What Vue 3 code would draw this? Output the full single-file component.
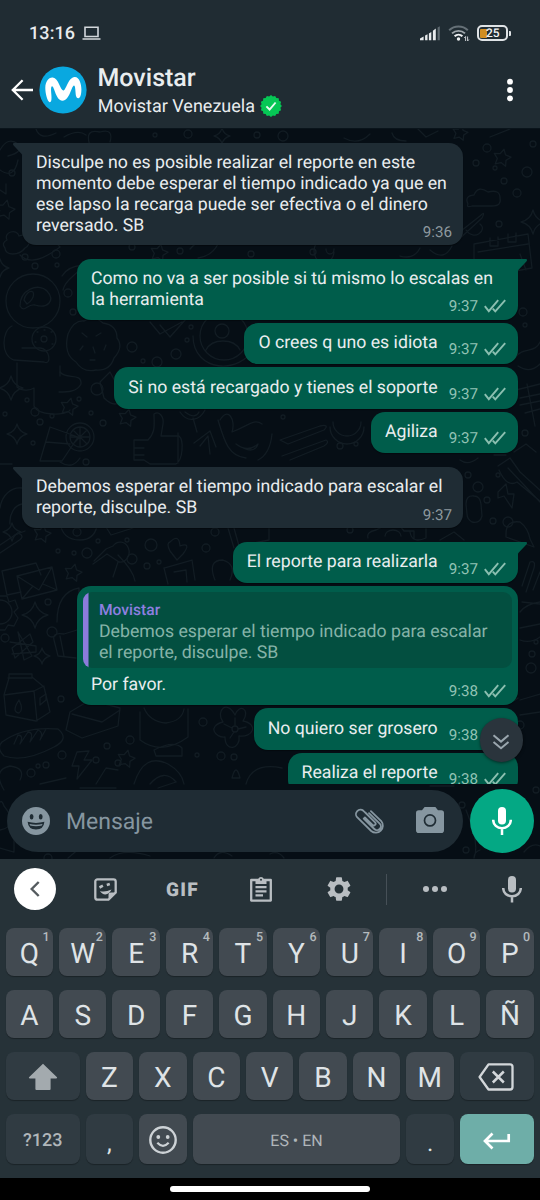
<script setup>
const messages = [
  { side: 'in', tail: true, lines: ['Disculpe no es posible realizar el reporte en este', 'momento debe esperar el tiempo indicado ya que en', 'ese lapso la recarga puede ser efectiva o el dinero', 'reversado. SB'], time: '9:36', wide: true },
  { side: 'out', tail: true, lines: ['Como no va a ser posible si tú mismo lo escalas en', 'la herramienta'], time: '9:37', wide: true },
  { side: 'out', lines: ['O crees q uno es idiota'], time: '9:37' },
  { side: 'out', lines: ['Si no está recargado y tienes el soporte'], time: '9:37' },
  { side: 'out', lines: ['Agiliza'], time: '9:37' },
  { side: 'in', tail: true, lines: ['Debemos esperar el tiempo indicado para escalar el', 'reporte, disculpe. SB'], time: '9:37', wide: true },
  { side: 'out', tail: true, lines: ['El reporte para realizarla'], time: '9:37' },
  { side: 'out', quote: { who: 'Movistar', lines: ['Debemos esperar el tiempo indicado para escalar', 'el reporte, disculpe. SB'] }, lines: ['Por favor.'], time: '9:38', wide: true },
  { side: 'out', lines: ['No quiero ser grosero'], time: '9:38' },
  { side: 'out', lines: ['Realiza el reporte'], time: '9:38' },
]

const row1 = 'QWERTYUIOP'.split('').map((k, i) => ({ k, n: (i + 1) % 10 }))
const row2 = 'ASDFGHJKLÑ'.split('')
const row3 = 'ZXCVBNM'.split('')

// Wallpaper doodles, in chat-area coordinates shifted by the header height.
const dots = [
  [25, 257, 3], [56, 254, 4], [35, 266, 3], [57, 265, 2], [68, 293, 4], [73, 312, 3], [132, 347, 5], [143, 361, 2],
  [191, 327, 2], [97, 389, 6], [5, 414, 2], [35, 412, 4], [52, 416, 2], [79, 399, 2], [91, 413, 2], [40, 422, 3], [103, 423, 3],
  [33, 443, 2], [27, 400, 2], [157, 362, 5], [176, 354, 5], [187, 340, 2], [487, 148, 4], [476, 163, 3], [495, 168, 2],
  [527, 172, 5], [504, 181, 3], [533, 144, 3], [517, 193, 4], [499, 224, 3], [523, 312, 4], [525, 325, 2], [12, 173, 3],
  [77, 532, 4], [98, 541, 2], [127, 540, 2], [151, 545, 6], [132, 559, 5], [87, 553, 5], [58, 551, 2], [74, 553, 2],
  [159, 562, 2], [206, 548, 4], [147, 566, 3], [215, 532, 4], [48, 602, 3], [52, 632, 5], [5, 638, 4], [61, 699, 3],
  [62, 755, 4], [46, 765, 3], [38, 766, 2], [31, 773, 4], [96, 760, 3], [107, 746, 3], [130, 740, 4], [118, 763, 3],
  [203, 722, 4], [221, 756, 4], [234, 757, 3], [197, 755, 2], [478, 487, 5], [468, 475, 3], [487, 500, 3], [498, 475, 2],
  [493, 521, 3], [508, 522, 5], [532, 654, 3], [531, 668, 5], [536, 642, 2], [188, 134, 4], [155, 135, 2], [257, 135, 3],
  [283, 136, 5], [180, 251, 3], [251, 254, 3], [132, 247, 3], [283, 417, 2], [340, 446, 3], [356, 444, 2], [313, 252, 3],
  [462, 805, 3], [466, 850, 3], [48, 858, 4], [525, 433, 3], [86, 462, 3], [350, 530, 3], [520, 725, 4], [536, 790, 3],
]
const stars = [[69, 407, 9], [127, 418, 9], [5, 210, 10], [502, 158, 9], [42, 534, 9], [73, 573, 9], [126, 759, 9], [460, 133, 8], [159, 253, 9]]
const sparks = [[11, 388, 12], [17, 434, 10], [533, 222, 12], [35, 615, 13], [42, 656, 8], [0, 268, 9], [222, 136, 8], [12, 532, 9]]
const shapes = [
  'M6 301a27 27 0 1 0 54 0a27 27 0 1 0-54 0M20 306c0-16 18-24 27-15c9 10 0 18-12 14c-8-2-10 9-15 1M24 300c1-6 6-10 9-8c2 4-2 10-6 12z',
  'M12 326c-10 4-12 30 2 34l30 2c8 4 6-14-4-14H22M17 363v24c6 5 14 3 17 1v18c4 10 32 10 36 4M60 372c6 8 22 0 21 12c-4 8-14 8-22 8',
  'M32 339a12 12 0 1 0 24 0a12 12 0 1 0-24 0M41 339a3 3 0 1 0 6 0a3 3 0 1 0-6 0M37 332h1M51 332h1M35 342h1M52 344h1M44 330h1',
  'M68 334q6-14 16-13q10-6 19 2q14 2 14 15q7 9-3 20q-4 13-18 12q-13 3-20-8q-13-8-8-28M82 333l5 4M96 336l5-3M80 350l3-4M93 347l2 6M106 345l-2 5M90 360h5',
  'M200 336a24 24 0 1 0 48 0a24 24 0 1 0-48 0M215 331a7 7 0 1 0 14 0a7 7 0 1 0-14 0M206 350c6-12 28-12 34 0M193 336c0 36 48 40 62 10',
  'M150 322l10 12l22-12M160 325l10 12l16-18M62 276c7-12 30-16 50-2M63 290c2-10 12-14 16-20',
  'M66 437a14 14 0 1 0 28 0a14 14 0 1 0-28 0M70 437a10 10 0 1 0 20 0a10 10 0 1 0-20 0M80 427v20M70 437h20M73 430l14 14M87 430l-14 14M50 427l28 10l-16 24H40zM46 442l24 2',
  'M134 440h14c8-8 6-16 6-26c6-4 10 4 9 10l-2 12h18c5 4 4 24-3 28h-26l-6-4h-10zM134 448h10M134 455h10M178 433v30',
  'M180 412c8 12 20 8 25-2M185 412c8 6 12 4 14 0M193 418l4 14M194 443l16-12l6 16M200 446l8-10l2 18M220 420c8-14 16 0 12 12c16-6 22-14 30-8M218 420c6 20 10 36 28 38M236 444q12 9 22 0q-4 12-22 0',
  'M7 240c-4-8 10-12 12-4c10-4 14 8 6 12c-6 8-20 8-20 0q-4-5 2-8M20 255c10 10 24 4 40-8l-12-14',
  'M468 204q-4-8 6-9q4-10 14-3q12-3 12 6q2 8-8 8h-20q-6 2-4-2M452 238l28-22q6-6 2 2l-26 24zM466 230c8 12 22 0 14-6',
  'M474 260v-16l54-10l4 34l-22 4M490 238v8h8v-9M508 234v8h8v-9M478 252l50-8M520 254l6 16M494 262l-14 10l30 4',
  'M330 427a17 17 0 1 0 34 0M333 422a14 14 0 0 0 28 0M280 440l40-14q10-2 4 4l-36 14zM282 456l44-16q4 2-2 6l-34 14M272 434q-2 20-14 26',
  'M515 358c8-12 20-4 25-16M518 366q12 8 22-2M516 390l24-6M520 398l20-4M520 405l20-4M525 413l15-4M527 384l8 42',
  'M2 571l34-8l5 12M2 571l5 24l14-3M17 576l35-9l5 23l-35 9zM17 576l22 14l13-23M22 599l11-13M57 590l-14-6',
  'M0 508a20 24 0 0 1 22-20M10 524a14 18 0 0 1 12-20M0 545l18-12q8 3 0 8l-18 12M60 522q2 18 20 18q14 0 17-14M106 527l5 8l22-7',
  'M170 542q9-9 10 4q12-4 3 8l-6 6l-7-9q-4-8 0-9M94 561l12-12l7-3a9 10 0 1 1 6 16l-12-8l-14 10M118 562l-5 15M118 555q15 15 17 26',
  'M228 528l6 20M234 528l5 18l30-6v-14M164 568l28-8l3 20M164 568l4 16M174 572l12-2l1 12M215 580q-8-20 8-20q14 4 7 20',
  'M-12 612a12 12 0 1 0 24 0a12 12 0 1 0-24 0M-1 596h8l2 6l6-2l3 8l-4 4l4 6l-4 8l-6-1l-3 5h-6M57 622q0-30 22-34v34',
  'M12 648l18-14l3 8l-18 16zM18 632l14 24l-8 4zM10 642l26 4v6l-24 2M54 640q-2-8 10-6l13-4M54 640l4 16l18 2M60 636l4 20',
  'M8 678h24v-4H9v4l-5 17l2 20l30 6l14-9l-6-25l-12-10M4 695l30-4l10-5M34 691l3 30M19 700q-8 12 0 13q5-3 0-13M40 698l6-4v6l-6 5z',
  'M2 742q22-16 56-13q12 10-4 18q-30 16-50 9q-8-8-2-14M14 744l4-9q6 0 2 9l8-12q6 0 2 10l8-12q6 2 2 10l6-11',
  'M70 712l20-12l30 8l-2 18l-36 12l-16-8zM72 714l30 8l18-12M140 712v28q22 16 48-3v-28M144 708q6 14 22 15q16-2 18-14M154 750q20-10 28-2v8h-26z',
  'M235 715c-8-16-20-4-12 7c-16 4-8 16 2 15c0 16 16 12 14-1c14 2 20-12 4-15c8-12-4-18-8-6M235 729m-3 0a3 3 0 1 0 6 0a3 3 0 1 0-6 0M235 726v-8M238 729l8-2M234 732l-4 6M232 728l-8-4',
  'M77 752l12-1l-5 9h8l-15 19l2-13h-7zM498 492l8-8l2 10h6l-2 14l-8-12l-6 2z',
  'M466 504q0-9 8-8q6 0 7 8l1 12q-2 8-10 6q-5-3-5-8zM506 534q0-14 14-12q8 6 10 17l4 8l-28-10zM498 466l12-8l10 14l22 20M499 470q8 18 18 12l24 20M508 468l32 34',
  'M368 538q-2-6 8-8l8-4h16l4 5h10v8M385 536a8 6 0 0 1 16 0M410 532q2 12 16 6v-12M15 535l10-4M440 540l14-8l10 8',
  'M522 602l18 2M520 612q6-8 20-10M520 628l20-4M520 640q10 4 20-3M520 700l20-6M520 715l20-3M522 586l8-24q6-2 4 6l-8 24M533 590l7-18',
  'M4 790q-12-20 6-24q16 2 10 14M40 784l26-6M96 784l10-16l12 2M134 784q10-32 34-20q14 8 16 20M150 784q14-16 26-2M246 784q6-22 36-16M232 778q4-16 8 0z',
  'M0 830q20-4 4-24q-2-6-4-4M0 848l14 4v-18M68 858l12-10M110 858q14-10 40-2M214 858q6-10 18-2M270 854q8-4 14 4M466 810q14 34 8 48M480 850q-6 2-6 8M524 852q8-10 16-6M80 788h36M158 788l18-6M430 786h24',
  'M90 146q-6-18 10-14q14-4 10 10M0 150q8-14 18-6q6 8-10 12M36 129q4 12 20 4M64 137q14-8 22-2M344 138q14 8 26-4M392 133q2 8 14 8M418 129l8 8l12-6M510 129l-20 8',
  'M0 170q14 10 18-10M0 190l6 4v-10M60 376v-10M190 249q12-14 28-5q-6 12-20 14M320 240a10 12 0 1 0 14 12M326 249a4 5 0 1 0 8 0M400 256q14 4 20-8M430 250q14 12 22-4',
  'M514 452l12-8l10 8M500 700q8 6 18-2M100 382l10-10l14 26q-8 12-20 0zM0 464h12M60 462q12 8 20-4M494 455h12M460 460q8 6 18-2',
]
const starPath = ([x, y, r]) => {
  const pts = []
  for (let i = 0; i < 10; i++) {
    const a = (i * Math.PI) / 5 - 1.35
    const q = i % 2 ? r * 0.52 : r
    pts.push(`${(x + q * Math.cos(a)).toFixed(1)} ${(y + q * Math.sin(a)).toFixed(1)}`)
  }
  return `M${pts.join('L')}Z`
}
const sparkPath = ([x, y, r]) => {
  const s = r * 0.2
  return `M${x} ${y - r}Q${x + s} ${y - s} ${x + r} ${y}Q${x + s} ${y + s} ${x} ${y + r}Q${x - s} ${y + s} ${x - r} ${y}Q${x - s} ${y - s} ${x} ${y - r}Z`
}
const badgePath = (() => {
  const pts = []
  for (let i = 0; i < 32; i++) {
    const a = (i * Math.PI) / 16
    const q = i % 2 ? 9.6 : 10.9
    pts.push(`${(11 + q * Math.cos(a)).toFixed(2)} ${(11 + q * Math.sin(a)).toFixed(2)}`)
  }
  return `M${pts.join('L')}Z`
})()
</script>

<template>
  <div class="phone">
    <header class="top">
      <div class="status">
        <span class="clock">13:16</span>
        <svg class="laptop" width="19" height="15" viewBox="0 0 19 15"><path d="M3 1.2h13v9.3H3zM.5 13h18" fill="none" stroke="#d3d8dc" stroke-width="1.6" /></svg>
        <span class="grow"></span>
        <svg class="signal" width="21" height="15" viewBox="0 0 21 15">
          <path d="M0 14.200V12.600l3.600-2v3.600zM5.100 9.600l2.400-1.300v5.900H5.100zM8.900 7.400l2.400-1.500v8.300H8.900zM12.900 4.800l2.900-2.200v11.600h-2.900z" fill="#e8ebed" />
          <path d="M17.600 1.500l2.200-1.200v13.900h-2.200z" fill="#5f6a71" />
        </svg>
        <svg class="wifi" width="22" height="17" viewBox="0 0 22 17" fill="none">
          <path d="M1.200 5.200a13.500 13.500 0 0 1 18.600 0" stroke="#657077" stroke-width="2" />
          <path d="M4 8.400a9.500 9.500 0 0 1 13 0" stroke="#a0a8ad" stroke-width="1.900" />
          <path d="M6.600 11.300a5.700 5.700 0 0 1 7.800 0" stroke="#eef0f2" stroke-width="2" />
          <circle cx="10.500" cy="14" r="1.700" fill="#eef0f2" />
          <path d="M17.600 16v-4.500l-1.300 1.500M19.600 11.500V16l1.300-1.500" stroke="#c7ccd0" stroke-width="1" />
        </svg>
        <div class="battery"><i></i><b>25</b></div>
        <span class="nub"></span>
      </div>
      <div class="bar">
        <svg class="back" width="22" height="22" viewBox="0 0 22 22"><path d="M11.600 1.200L1.800 11l9.800 9.800M1.800 11H22" fill="none" stroke="#fff" stroke-width="2.300" /></svg>
        <svg class="avatar" width="48" height="48" viewBox="0 0 48 48">
          <circle cx="24" cy="24" r="23.600" fill="#09a8e0" />
          <path d="M10.600 36.200c-2.200-.8-4.400-9.200-4.300-14.500c.1-5.700 3.200-10.500 7.500-10.100c5.800.5 7.600 12.900 10.400 12.900c3 0 4.700-13.200 11.500-13.600c4.700-.1 6.700 7.100 6.700 12.400c0 4.300-.8 8.800-3 9c-2.400.1-2.600-2.800-2.900-6.200c-.3-4-.5-6.500-1.500-6.500c-2.500 0-4.200 15-11.500 15.100c-6.700.1-8.100-14.500-10.500-14.400c-1 .1-1.100 2.500-.8 6.400c.4 4.800.9 9.500-1.600 9.500z" fill="#fff" />
        </svg>
        <div class="who">
          <div class="name">Movistar</div>
          <div class="sub">Movistar Venezuela
            <svg width="22" height="22" viewBox="0 0 22 22"><path :d="badgePath" fill="#06c755" /><path d="M6.400 11.400l3.200 3.100l6-7" fill="none" stroke="#e9fbf0" stroke-width="1.900" /></svg>
          </div>
        </div>
        <svg class="kebab" width="6" height="24" viewBox="0 0 6 24" fill="#fff"><circle cx="3" cy="3.700" r="2.900" /><circle cx="3" cy="12" r="2.900" /><circle cx="3" cy="20.300" r="2.900" /></svg>
      </div>
    </header>

    <main class="chat">
      <svg class="wall" width="540" height="730" viewBox="0 129 540 730">
        <g fill="none" stroke="#121c23" stroke-width="1.300" stroke-linejoin="round" stroke-linecap="round">
          <circle v-for="(d, i) in dots" :key="'d' + i" :cx="d[0]" :cy="d[1]" :r="d[2]" />
          <path v-for="(s, i) in stars" :key="'s' + i" :d="starPath(s)" />
          <path v-for="(s, i) in sparks" :key="'p' + i" :d="sparkPath(s)" />
          <path v-for="(s, i) in shapes" :key="'h' + i" :d="s" />
        </g>
      </svg>

      <section class="list">
        <article v-for="(m, i) in messages" :key="i" class="bubble" :class="[m.side, { tail: m.tail, wide: m.wide, tall: m.lines.length > 1, quoted: m.quote }]">
          <svg v-if="m.tail" class="nib" width="11" height="16" viewBox="0 0 11 16"><path d="M0 0H8.800Q11 .4 9.400 2.400L1.800 10.500Q0 12.500 0 15z" /></svg>
          <div v-if="m.quote" class="quote">
            <div class="qwho">{{ m.quote.who }}</div>
            <div v-for="l in m.quote.lines" :key="l" class="qline">{{ l }}</div>
          </div>
          <div class="body">
            <div class="text"><div v-for="l in m.lines" :key="l">{{ l }}</div></div>
            <div class="meta">
              <span>{{ m.time }}</span>
              <svg v-if="m.side === 'out'" width="22" height="14" viewBox="0 0 22 14"><path d="M.8 7.200l4 5L14.200 1.200M8.800 9.600l2.500 2.800L21.200 1.200" fill="none" stroke="#8bbfb0" stroke-width="1.900" /></svg>
            </div>
          </div>
        </article>
      </section>

      <button class="down">
        <svg width="18" height="16" viewBox="0 0 18 16"><path d="M1.500 1.300L9 7.600l7.500-6.300M1.500 8L9 14.300L16.500 8" fill="none" stroke="#9aa6ae" stroke-width="2" /></svg>
      </button>

      <footer class="composer">
        <div class="field">
          <svg class="smile" width="28" height="28" viewBox="0 0 28 28">
            <circle cx="14" cy="14" r="14" fill="#8696a0" />
            <ellipse cx="9.600" cy="9.700" rx="1.900" ry="2.700" fill="#1f2c34" /><ellipse cx="18.700" cy="9.700" rx="1.900" ry="2.700" fill="#1f2c34" />
            <path d="M5.600 14.800q8.400 2.200 16.800 0q-.6 7.700-8.400 7.700t-8.400-7.700z" fill="#1f2c34" /><path d="M7.500 17q6.500 1.500 13 0l-.6 1.500q-5.800 1.300-11.800 0z" fill="#8696a0" />
          </svg>
          <span class="hint">Mensaje</span>
          <svg class="clip" width="30" height="27" viewBox="0 0 30 27"><path d="M14 5.200L24.700 15.600a3.800 3.800 0 0 1-5.400 5.400L8.700 10.500M10.300 4.600l-1.900-1.800a4.500 4.500 0 0 0-6.300 6.400L16.200 23a7.100 7.100 0 0 0 10-10L15.900 3.100M10.200 4.500l9.900 9.900a1.800 1.800 0 0 1-2.600 2.500l-7.600-7.500" fill="none" stroke="#8696a0" stroke-width="1.800" stroke-linecap="round" /></svg>
          <svg class="cam" width="28" height="26" viewBox="0 0 28 26"><path d="M8.600 0h10.800l2.600 3.200h3.200a2.800 2.800 0 0 1 2.800 2.800v17.200a2.800 2.800 0 0 1-2.800 2.800H2.800A2.800 2.800 0 0 1 0 23.200V6a2.800 2.800 0 0 1 2.800-2.800H6z" fill="#8696a0" /><circle cx="14" cy="13.400" r="5.500" fill="none" stroke="#1f2c34" stroke-width="1.700" /></svg>
        </div>
        <button class="mic"><svg width="20" height="28" viewBox="0 0 20 28"><rect x="6" y="0" width="8" height="17.500" rx="4" fill="#fff" /><path d="M1.200 12.800c0 5 3.900 8.400 8.800 8.400s8.800-3.400 8.800-8.400M10 21.200V28" fill="none" stroke="#fff" stroke-width="2.500" /></svg></button>
      </footer>
    </main>

    <section class="keyboard">
      <div class="tools">
        <span class="collapse"><svg width="10" height="16" viewBox="0 0 10 16"><path d="M8.700 1L1.700 8l7 7" fill="none" stroke="#555b5f" stroke-width="2.400" /></svg></span>
        <svg width="23" height="23" viewBox="0 0 23 23"><path d="M14.500 21.700H3.500A2.200 2.200 0 0 1 1.300 19.500v-16A2.200 2.200 0 0 1 3.500 1.300h16a2.200 2.200 0 0 1 2.200 2.200v11z" fill="none" stroke="#b9bec2" stroke-width="2.300" /><path d="M14.500 22v-5.200a2.300 2.300 0 0 1 2.300-2.300H22z" fill="#b9bec2" /><path d="M5.500 9.500l3.400-1.800M12.800 7l3-1" stroke="#b9bec2" stroke-width="2.600" /><path d="M6 13q5 1.500 11.500-1.500q-2.500 5-6.200 4.900q-3.300 0-5.300-3.400z" fill="#b9bec2" /></svg>
        <span class="gif">GIF</span>
        <svg width="22" height="26" viewBox="0 0 22 26"><path d="M1.200 4h19.600v20.600H1.200z" fill="none" stroke="#b9bec2" stroke-width="2.300" stroke-linejoin="round" /><path d="M5.500 3h2.700a3 3 0 0 1 5.600 0h2.700v5h-11z" fill="#b9bec2" /><circle cx="11" cy="3.700" r="1" fill="#263238" /><path d="M5.500 11.200h11M5.500 15.300h11M5.500 19.400h7.500" stroke="#b9bec2" stroke-width="2.200" /></svg>
        <svg width="28" height="28" viewBox="0 0 24 24"><path fill="#b9bec2" d="M19.430 12.980c.04-.32.07-.64.07-.98s-.03-.66-.07-.98l2.110-1.650c.19-.15.24-.42.12-.64l-2-3.460c-.12-.22-.39-.3-.61-.22l-2.490 1c-.52-.4-1.080-.73-1.690-.98l-.38-2.650C14.460 2.180 14.250 2 14 2h-4c-.25 0-.46.18-.49.42l-.38 2.650c-.61.25-1.170.59-1.690.98l-2.490-1c-.23-.09-.49 0-.61.22l-2 3.460c-.13.22-.07.49.12.64l2.110 1.650c-.04.32-.07.65-.07.98s.03.66.07.98l-2.110 1.650c-.19.15-.24.42-.12.64l2 3.460c.12.22.39.3.61.22l2.490-1c.52.4 1.080.73 1.690.98l.38 2.650c.03.24.24.42.49.42h4c.25 0 .46-.18.49-.42l.38-2.650c.61-.25 1.170-.59 1.690-.98l2.490 1c.23.09.49 0 .61-.22l2-3.460c.12-.22.07-.49-.12-.64l-2.110-1.650zM12 15.800a3.800 3.800 0 1 1 0-7.600a3.800 3.800 0 0 1 0 7.600z" /></svg>
        <span class="rule"></span>
        <svg width="24" height="6" viewBox="0 0 24 6" fill="#b9bec2"><circle cx="3" cy="3" r="3" /><circle cx="12" cy="3" r="3" /><circle cx="21" cy="3" r="3" /></svg>
        <svg width="20" height="27" viewBox="0 0 20 27"><rect x="6" y="0" width="8" height="16.500" rx="4" fill="#b9bec2" /><path d="M1.200 12c0 5 3.900 8.200 8.800 8.200s8.800-3.200 8.800-8.200M10 20.200V26.500" fill="none" stroke="#b9bec2" stroke-width="2.500" /></svg>
      </div>
      <div class="keys">
        <div class="row"><span v-for="c in row1" :key="c.k" class="key">{{ c.k }}<sup>{{ c.n }}</sup></span></div>
        <div class="row"><span v-for="c in row2" :key="c" class="key">{{ c }}</span></div>
        <div class="row">
          <span class="key dim side"><svg width="30" height="28" viewBox="0 0 30 28"><path d="M15 .8L29 14.200q.6 1-.8 1.200H22.600V26q0 1-1 1H8.400q-1 0-1-1V15.400H1.800q-1.400-.2-.8-1.200z" fill="#a3aaae" /></svg></span>
          <span v-for="c in row3" :key="c" class="key">{{ c }}</span>
          <span class="key dim side"><svg class="bksp" width="36" height="28" viewBox="0 0 36 28"><path d="M10.500 1.300H32a2.500 2.500 0 0 1 2.500 2.500V24a2.500 2.500 0 0 1-2.500 2.500H10.500L1.600 14z" fill="none" stroke="#d3d7da" stroke-width="2.300" stroke-linejoin="round" /><path d="M14.800 8.500l11 11M25.800 8.500l-11 11" stroke="#d3d7da" stroke-width="2.500" /></svg></span>
        </div>
        <div class="row last">
          <span class="key dim side small">?123</span>
          <span class="key dim punct">,</span>
          <span class="key"><svg width="28" height="28" viewBox="0 0 28 28"><circle cx="14" cy="14" r="12.700" fill="none" stroke="#cdd2d6" stroke-width="2.400" /><circle cx="9.300" cy="11" r="1.900" fill="#cdd2d6" /><circle cx="18.700" cy="11" r="1.900" fill="#cdd2d6" /><path d="M8.300 16.800q5.700 6 11.400 0" fill="none" stroke="#cdd2d6" stroke-width="2.200" /></svg></span>
          <span class="key space">ES • EN</span>
          <span class="key dim punct">.</span>
          <span class="key side enter"><svg width="28" height="18" viewBox="0 0 28 18"><path d="M9.500 1.500L2 9l7.500 7.500M2 9h23.700V2" fill="none" stroke="#fff" stroke-width="2.700" /></svg></span>
        </div>
      </div>
    </section>
    <nav class="gesture"><span></span></nav>
  </div>
</template>

<style>
body { margin: 0; background: #000; }
</style>

<style scoped>
.phone { width: 540px; height: 1200px; display: flex; flex-direction: column; overflow: hidden; font-family: Roboto, "Liberation Sans", sans-serif; text-rendering: geometricPrecision; color: #e9edef; }
.phone * { box-sizing: border-box; }
button { border: 0; padding: 0; display: flex; align-items: center; justify-content: center; }
svg { display: block; flex: none; }
.top { height: 129px; background: #202c33; flex: none; border-bottom: 1px solid #0a141b; }
.status { height: 60px; padding: 6px 29px 0 29px; display: flex; align-items: center; }
.clock { font-size: 18px; font-weight: 500; color: #e8ebed; letter-spacing: .1px; width: 53px; }
.grow { flex: 1; }
.signal { margin-right: 7px; }
.wifi { margin-right: 7px; margin-top: 1px; }
.battery { width: 31px; height: 16px; border: 2px solid #dfe3e6; border-radius: 5px; display: flex; align-items: center; padding-left: 1px; }
.battery i { width: 6.500px; height: 9px; background: #d08d22; border-radius: 1px 0 0 1px; }
.battery b { font-size: 12px; line-height: 12px; font-weight: 500; color: #f1f3f4; margin-left: -.5px; }
.nub { width: 2px; height: 5px; background: #dfe3e6; margin: 0 0 0 1px; border-radius: 0 1px 1px 0; }
.bar { height: 68px; display: flex; padding-left: 11px; }
.back { margin-top: 19px; }
.avatar { margin: 6px 0 0 5.500px; }
.who { margin-left: 11px; flex: 1; }
.name { font-size: 25px; line-height: 30px; font-weight: 500; padding-top: 4px; }
.sub { font-size: 18px; line-height: 22px; display: flex; align-items: center; gap: 5.500px; margin: 2px 0 0 .3px; }
.sub svg { margin-top: -2px; }
.kebab { margin: 18px 27.500px 0 0; }

.chat { position: relative; height: 730px; flex: none; background: #060e15; display: flex; flex-direction: column; }
.wall { position: absolute; left: 0; top: 0; }
.list { position: relative; height: 655px; overflow: hidden; padding: 13.700px 22px 0; display: flex; flex-direction: column; align-items: flex-end; }
.bubble { position: relative; flex: none; background: #005d4b; border-radius: 14px; height: 41.500px; margin-top: 3px; font-size: 17.700px; line-height: 21px; white-space: nowrap; box-shadow: 0 1px 1px rgba(0, 0, 0, .35); display: flex; flex-direction: column; }
.bubble.wide { width: 441px; }
.bubble.tall { height: 60.700px; }
.bubble.quoted { height: 118.900px; }
.bubble.in { background: #1f2c34; align-self: flex-start; }
.bubble.tail { margin-top: 14px; }
.bubble.out.tail { border-top-right-radius: 0; }
.bubble.in.tail { border-top-left-radius: 0; }
.bubble:first-child { margin-top: 0; height: 102.300px; }
.nib { position: absolute; top: 0; left: calc(100% - 1px); fill: #005d4b; }
.in .nib { left: auto; right: calc(100% - 1px); transform: scaleX(-1); fill: #1f2c34; }
.body { flex: 1; display: grid; padding: 10px 11px 0 13.900px; }
.bubble:not(.wide) .body { padding-top: 10.600px; }
.text { grid-area: 1 / 1; padding-right: 69px; }
.wide .text { padding-right: 0; margin-bottom: -4px; }
.bubble:not(.wide) .text { padding-right: 69.300px; margin-bottom: -4px; }
.quoted .body { padding-top: 7px; }
.meta { grid-area: 1 / 1; justify-self: end; align-self: end; display: flex; align-items: center; gap: 6px; font-size: 15.200px; line-height: 18px; color: #8e999f; padding-bottom: 4.600px; }
.wide .meta { padding-bottom: 4.200px; }
.bubble:not(.wide) .meta { padding-bottom: 5.800px; }
.quoted .meta { padding-bottom: 5px; }
.out .meta { color: #92c3b5; padding-right: 1px; }
.quote { margin: 5.700px 6px 0 5.700px; height: 76px; background: #034f40; border-radius: 9px; padding: 7.500px 0 0 16.300px; background-image: linear-gradient(#8c7bdc, #8c7bdc); background-size: 5.500px 100%; background-repeat: no-repeat; }
.qwho { color: #8f7fe0; font-size: 15.600px; line-height: 20px; font-weight: 500; }
.qline { color: #86b3a8; line-height: 20.500px; }
.qwho + .qline { margin-top: 2.800px; }

.down { position: absolute; left: 479.500px; top: 589px; width: 43.500px; height: 43.500px; border-radius: 50%; background: #2a343c; box-shadow: 0 1px 3px rgba(0, 0, 0, .5); }
.down svg { margin-top: 5px; }
.composer { position: relative; height: 75px; display: flex; padding: 4px 0 0 7px; }
.field { width: 456px; height: 62px; margin-top: 2px; border-radius: 31px; background: #1f2c34; display: flex; align-items: center; padding-left: 15px; }
.hint { color: #8696a0; font-size: 23px; margin-left: 16px; flex: 1; padding-top: 1px; }
.clip { margin-right: 30.500px; }
.cam { margin: -2px 19.500px 0 0; }
.mic { width: 64px; height: 64px; border-radius: 50%; background: #04a884; margin-left: 6.500px; margin-top: 1px; }

.keyboard { height: 319px; flex: none; background: #263238; overflow: hidden; }
.tools { height: 60px; display: grid; grid-template-columns: 70px 71px 82px 75px 81px 14px 83px 72px; align-items: center; justify-items: center; }
.collapse { width: 42px; height: 42px; border-radius: 50%; background: #fff; display: flex; align-items: center; justify-content: center; }
.gif { font-size: 19px; font-weight: 900; color: #b9bec2; letter-spacing: 1.300px; margin-left: 1px; }
.rule { width: 1px; height: 31px; background: #465057; }
.keys { padding: 9px 6px 0 5.700px; display: flex; flex-direction: column; gap: 14px; }
.row { display: flex; gap: 6px; height: 48px; }
.row.last { height: 50px; }
.key { position: relative; width: 47.400px; flex: none; background: #424a51; border-radius: 8px; box-shadow: 0 1px 1px rgba(0, 0, 0, .3); display: flex; align-items: center; justify-content: center; font-size: 28px; line-height: 32px; color: #dfe3e6; padding-top: 3.500px; }
.key svg { margin-top: -2.500px; }
.key sup { position: absolute; right: 3.500px; top: 2px; font-size: 12.500px; line-height: 15px; color: #b4babe; font-weight: 500; }
.dim { background: #303b42; }
.side { width: 74.100px; }
.small { font-size: 18px; color: #b0b6ba; font-weight: 500; }
.key.space { width: 207.900px; font-size: 16px; color: #b0b6ba; }
.key.punct { font-size: 24px; padding-top: 8px; }
.enter { background: #6eaea8; }
.key.enter svg { margin-top: 1px; }
.bksp { margin-left: -1px; }
.gesture { height: 22px; background: #000; display: flex; justify-content: center; }
.gesture span { width: 200px; height: 5.500px; margin-top: 8px; border-radius: 3px; background: #fff; }
</style>
